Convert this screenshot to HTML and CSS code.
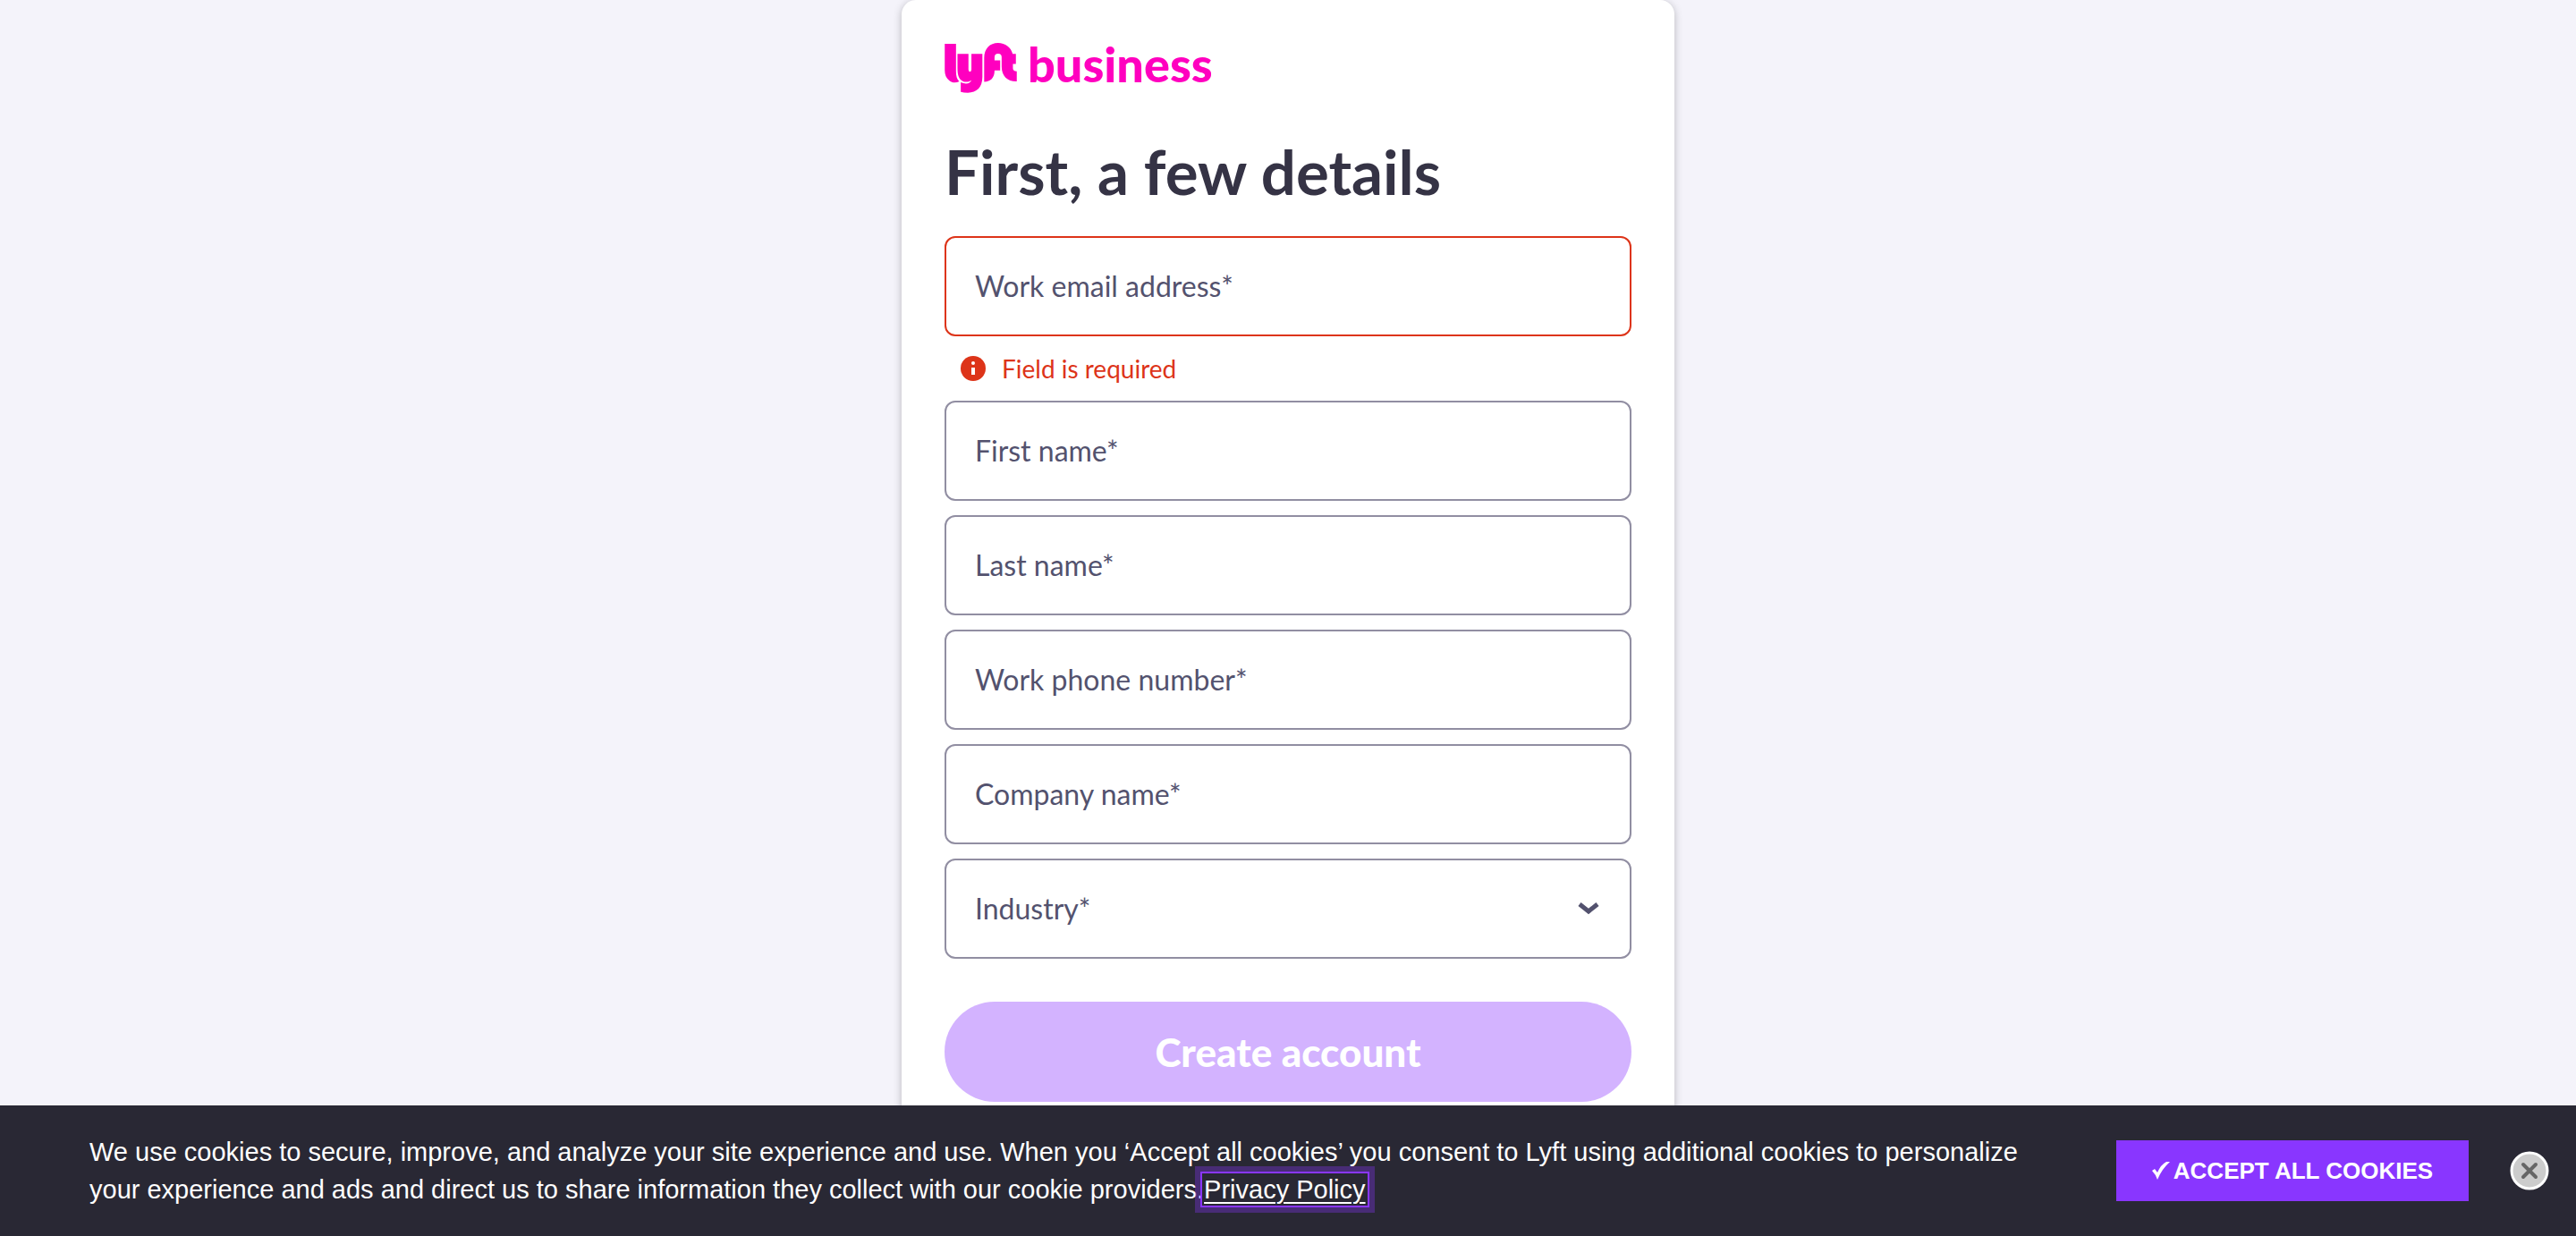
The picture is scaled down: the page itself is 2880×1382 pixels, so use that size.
FILE: index.html
```html
<!DOCTYPE html>
<html lang="en">
<head>
<meta charset="utf-8">
<meta name="viewport" content="width=device-width, initial-scale=1">
<title>Lyft Business</title>
<link rel="stylesheet" href="styles.css">
</head>
<body>
<main class="page">
  <section class="card">
    <a class="brand" href="#" aria-label="Lyft Business">
      <svg class="brand-mark" viewBox="0 0 243 169" aria-hidden="true">
        <path d="M0 3H38V95C38 112 41 123 49 130C38 136 24 135 15 127C5 119 0 107 0 92Z"/>
        <path d="M43 37H80V90Q80 97 85 97Q90 97 90 90V37H127V115C127 150 108 168 78 168Q64 168 54 165V133C70 140 86 138 90 126C80 133 65 134 56 126C46 117 43 105 43 85Z"/>
        <path d="M133 131V50C133 20 152 0 180 0C204 0 224 15 229 37H240V71H230V85Q230 95 243 96V130C212 131 192 112 192 80V48Q192 36 180 36Q168 36 168 48V59H187V93H168C168 118 155 131 133 131Z"/>
      </svg>
      <span class="brand-name">business</span>
    </a>
    <h1 class="title">First, a few details</h1>
    <form class="form">
      <div class="field field-error">
        <input class="control" id="email" type="email" aria-describedby="email-error" aria-invalid="true">
        <label class="label" for="email">Work email address*</label>
      </div>
      <p class="error" id="email-error">
        <svg class="error-icon" viewBox="0 0 28 28" aria-hidden="true"><circle cx="14" cy="14" r="14" fill="#dd3419"/><circle cx="14" cy="8" r="2" fill="#fff"/><path d="M12 13h4v8h-4z" fill="#fff"/></svg>
        <span>Field is required</span>
      </p>
      <div class="field">
        <input class="control" id="first" type="text">
        <label class="label" for="first">First name*</label>
      </div>
      <div class="field">
        <input class="control" id="last" type="text">
        <label class="label" for="last">Last name*</label>
      </div>
      <div class="field">
        <input class="control" id="phone" type="tel">
        <label class="label" for="phone">Work phone number*</label>
      </div>
      <div class="field">
        <input class="control" id="company" type="text">
        <label class="label" for="company">Company name*</label>
      </div>
      <div class="field">
        <select class="control" id="industry"><option value=""></option></select>
        <label class="label" for="industry">Industry*</label>
        <svg class="chevron" viewBox="0 0 24 14" aria-hidden="true"><path d="M2 2l10 8 10-8" fill="none" stroke="#53526e" stroke-width="5"/></svg>
      </div>
      <button class="submit" type="submit" disabled>Create account</button>
    </form>
  </section>
</main>
<aside class="cookies" aria-label="Cookie consent">
  <p class="cookies-text">We use cookies to secure, improve, and analyze your site experience and use. When you ‘Accept all cookies’ you consent to Lyft using additional cookies to personalize your experience and ads and direct us to share information they collect with our cookie providers.<a class="policy" href="#">Privacy Policy</a></p>
  <button class="accept" type="button"><svg class="check" viewBox="0 0 20 20" aria-hidden="true"><path d="M0 10l3-2 3 4Q10 3 16 0h4Q11 8 6 20Q4 14 0 10Z" fill="#fff"/></svg>ACCEPT ALL COOKIES</button>
  <button class="close" type="button" aria-label="Close"><svg class="close-icon" viewBox="0 0 44 44" aria-hidden="true"><circle cx="22" cy="22" r="20" fill="#ccc" stroke="#fff" stroke-width="3"/><path d="M15 15l14 14M29 15L15 29" stroke="#666" stroke-width="4" stroke-linecap="round"/></svg></button>
</aside>
</body>
</html>
```
FILE: styles.css
```css
* { box-sizing: border-box; }

body {
  margin: 0;
  background: #f4f3fa;
  color: #353345;
  font-family: Lato, sans-serif;
}

.page {
  display: flex;
  justify-content: center;
  max-height: 100vh;
  overflow: hidden;
}

.card {
  width: 100%;
  max-width: 864px;
  padding: 48px 48px 200px;
  background: #fff;
  border-radius: 16px;
  box-shadow: 0 2px 10px rgba(0, 0, 0, .25);
}

.brand {
  display: flex;
  gap: 12px;
  height: 56px;
  color: #ff00bf;
  text-decoration: none;
}

.brand-mark {
  width: 81px;
  height: 56px;
  fill: currentColor;
}

.brand-name {
  font-size: 54px;
  font-weight: 900;
  line-height: 48px;
}

.title {
  margin: 48px 0 32px;
  font-size: 69px;
  font-weight: 700;
  line-height: 80px;
}

.form {
  display: grid;
  gap: 16px;
}

.field {
  display: grid;
  align-items: center;
}

.control,
.label,
.chevron {
  grid-area: 1 / 1;
}

.control {
  width: 100%;
  height: 112px;
  padding: 0 32px;
  border: 2px solid #918ea2;
  border-radius: 12px;
  background: #fff;
  color: #353345;
  font: inherit;
  font-size: 32px;
  appearance: none;
}

.field-error .control { border-color: #dd3419; }

.label {
  padding-left: 34px;
  color: #53526e;
  font-size: 32px;
  line-height: 40px;
  pointer-events: none;
}

.chevron {
  width: 24px;
  height: 14px;
  margin-right: 36px;
  justify-self: end;
  pointer-events: none;
}

.error {
  display: flex;
  align-items: center;
  gap: 18px;
  height: 40px;
  margin: 0;
  padding-left: 18px;
  color: #dd3419;
  font-size: 28px;
}

.error-icon {
  width: 28px;
  height: 28px;
}

.submit {
  height: 112px;
  margin-top: 32px;
  border: 0;
  border-radius: 56px;
  background: #d3b3ff;
  color: #fff;
  font: inherit;
  font-size: 44px;
  font-weight: 900;
}

.cookies {
  position: fixed;
  right: 0;
  bottom: 0;
  left: 0;
  display: flex;
  align-items: center;
  min-height: 146px;
  padding: 0 30px 0 100px;
  background: #292834;
  color: #fff;
  font-family: "Liberation Sans", sans-serif;
}

.cookies-text {
  flex: 1;
  margin: 0;
  padding-right: 80px;
  font-size: 29px;
  line-height: 42px;
}

.policy {
  color: #fff;
  outline: 2px solid #8936ff;
  outline-offset: 2px;
  box-shadow: 0 0 0 2px #292834, 0 0 0 10px rgba(137, 54, 255, .33);
  text-decoration-thickness: 2px;
  text-underline-offset: 4px;
}

.accept {
  display: flex;
  align-items: center;
  justify-content: center;
  gap: 4px;
  width: 394px;
  height: 68px;
  border: 0;
  background: #8936ff;
  color: #fff;
  font: 700 26px/32px "Liberation Sans", sans-serif;
}

.check {
  width: 20px;
  height: 20px;
}

.close {
  width: 44px;
  height: 44px;
  margin-left: 46px;
  padding: 0;
  border: 0;
  background: none;
}

.close-icon {
  display: block;
  width: 44px;
  height: 44px;
}
```
